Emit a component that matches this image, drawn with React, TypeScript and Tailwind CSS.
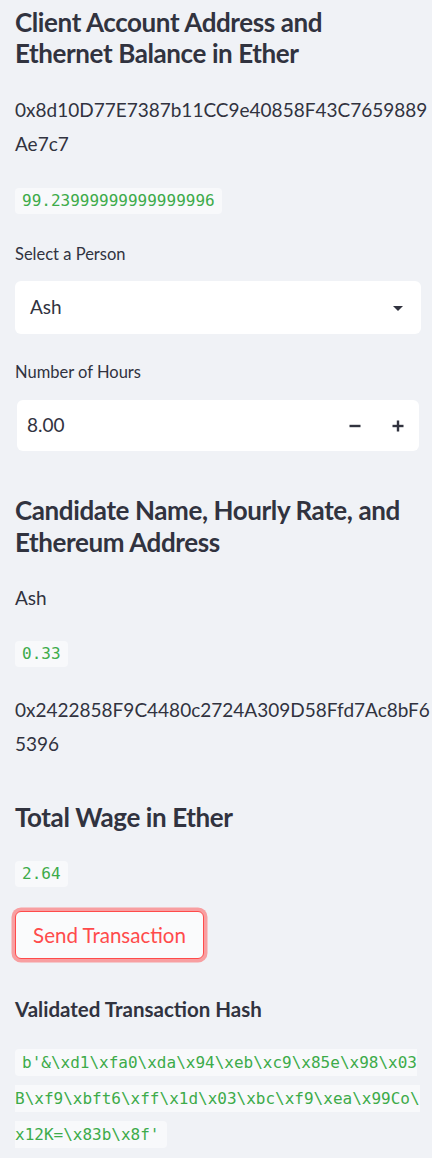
const mono = "font-['DejaVu_Sans_Mono','Liberation_Mono',monospace]"

const Code = ({ children }: { children: string }) => (
  <div>
    <span className={`${mono} inline-block h-[26px] leading-[26px] px-[7px] rounded-[4px] bg-[#f8f9fb] text-[16px] text-[#3dab4a]`}>
      {children}
    </span>
  </div>
)

const hashLines = [
  "b'&\\xd1\\xfa0\\xda\\x94\\xeb\\xc9\\x85e\\x98\\x03",
  "B\\xf9\\xbft6\\xff\\x1d\\x03\\xbc\\xf9\\xea\\x99Co\\",
  "x12K=\\x83b\\x8f'",
]

export default function App() {
  return (
    <div className="min-h-screen bg-[#f0f2f6] text-[#31333f] font-['Lato','Noto_Sans',sans-serif] pl-[15px] pr-[11px] pt-[7px] pb-4">
      <h2 className="text-[26px] leading-[31px] font-bold tracking-[-0.4px]">
        Client Account Address and
        <br />
        Ethernet Balance in Ether
      </h2>

      <p className="mt-[24px] text-[19px] leading-[34px] whitespace-nowrap">
        0x8d10D77E7387b11CC9e40858F43C7659889
        <br />
        Ae7c7
      </p>

      <div className="mt-[27px]">
        <Code>99.23999999999999996</Code>
      </div>

      <label className="block mt-[30px] text-[16.5px] leading-[20px]">Select a Person</label>
      <div className="mt-[17px] h-[53px] bg-white rounded-[6px] flex items-center pl-[15px] pr-[11px]">
        <span className="flex-1 text-[19px]">Ash</span>
        <svg width="24" height="24" viewBox="0 0 24 24" className="text-[#31333f]">
          <path d="M7 10l5 5 5-5z" fill="currentColor" />
        </svg>
      </div>

      <label className="block mt-[28px] text-[16.5px] leading-[20px]">Number of Hours</label>
      <div className="mt-[18px] mx-[2px] h-[51px] bg-white rounded-[6px] flex items-center">
        <span className="flex-1 pl-[10px] text-[19px]">8.00</span>
        <button className="w-[43px] h-full flex items-center justify-center">
          <svg width="12" height="12" viewBox="0 0 12 12">
            <rect x="0.5" y="4.8" width="11" height="2.4" fill="#31333f" />
          </svg>
        </button>
        <button className="w-[43px] h-full flex items-center justify-center">
          <svg width="12" height="12" viewBox="0 0 12 12">
            <rect x="0.5" y="4.8" width="11" height="2.4" fill="#31333f" />
            <rect x="4.8" y="0.5" width="2.4" height="11" fill="#31333f" />
          </svg>
        </button>
      </div>

      <h2 className="mt-[43px] text-[26px] leading-[32px] font-bold tracking-[-0.4px]">
        Candidate Name, Hourly Rate, and
        <br />
        Ethereum Address
      </h2>

      <p className="mt-[23px] text-[19px] leading-[34px]">Ash</p>

      <div className="mt-[26px]">
        <Code>0.33</Code>
      </div>

      <p className="mt-[26px] text-[19px] leading-[34px] whitespace-nowrap">
        0x2422858F9C4480c2724A309D58Ffd7Ac8bF6
        <br />
        5396
      </p>

      <h2 className="mt-[40px] text-[26px] leading-[32px] font-bold tracking-[-0.4px]">Total Wage in Ether</h2>

      <div className="mt-[28px]">
        <Code>2.64</Code>
      </div>

      <button className="mt-[24px] block h-[48px] w-[189px] rounded-[6px] border border-[#ff4b4b] bg-[#fafbfc] text-[#ff4b4b] text-[20.5px] shadow-[0_0_0_3.5px_rgba(255,75,75,0.5)]">
        Send Transaction
      </button>

      <p className="mt-[33px] text-[20.5px] leading-[34px] font-bold">Validated Transaction Hash</p>

      <p className="mt-[18px] text-[19px] leading-[34px] whitespace-nowrap">
        <span className={`${mono} text-[16px] text-[#3dab4a] bg-[#f8f9fb] px-[7px] py-[4px] rounded-[4px] box-decoration-slice`}>
          {hashLines[0]}
          <br />
          {hashLines[1]}
          <br />
          {hashLines[2]}
        </span>
      </p>
    </div>
  )
}
